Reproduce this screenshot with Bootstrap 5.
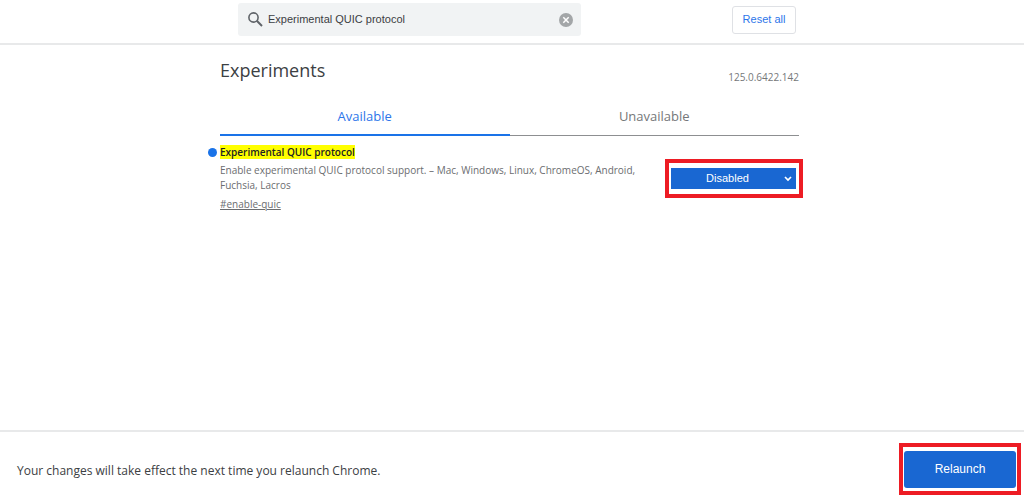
<!DOCTYPE html>
<html lang="en">
<head>
<meta charset="utf-8">
<meta name="viewport" content="width=device-width, initial-scale=1">
<title>Experiments</title>
<link href="https://cdn.jsdelivr.net/npm/bootstrap@5.3.0/dist/css/bootstrap.min.css" rel="stylesheet">
<style>
  body { font-family: "Open Sans", "Noto Sans", sans-serif; font-size: 12px; line-height: 15px; color: #3c4043; background: #fff; }
  .ui-font { font-family: "Liberation Sans", Arial, sans-serif; font-size: 11px; }
  .page-width { max-width: 579px; width: 100%; }
  .top-bar { border-bottom: 2px solid #e8e9ea; padding: 3px 5px 7px 0; }
  .search-box { width: 343px; height: 33px; background: #f1f3f4; border-radius: 3px; margin-left: 18px; padding: 0 8px 0 10px; }
  .search-box input { color: #3c4043; outline: 0; min-width: 0; padding: 0 0 0 5px; }
  .btn-reset { color: #2d76ea; border: 1px solid #dfe1e5; border-radius: 3px; height: 28px; width: 64px; padding: 0; margin-right: 3px; }
  .content { padding: 13px 5px 0 0; }
  h1 { font-size: 18px; line-height: 24px; font-weight: 400; }
  .version { color: #757779; font-size: 10px; padding-top: 12px; }
  .muted { color: #6b6d70; font-size: 10px; }
  .tabs { margin-top: 13px; }
  .tabs .nav-link { font-size: 13px; line-height: 20px; color: #757779; background: none; padding: 8px 0 9px; border: 0; border-bottom: 1px solid #8d8f91; border-radius: 0; }
  .tabs .nav-link.active { color: #2d76ea; border-bottom: 2px solid #1a73e8; padding-bottom: 8px; }
  .flag-row { padding-top: 9px; }
  .flag-dot { left: -12px; top: 3px; width: 9px; height: 9px; background: #1a73e8; }
  .flag-name { font-size: 10px; font-weight: 600; line-height: 15px; color: #202124; margin-bottom: 3px; }
  .flag-name mark { background: #ff0; color: inherit; padding: 0; }
  .flag-text { width: 430px; }
  .flag-text p { margin-bottom: 3px; }
  .frame { border: 4px solid #ed1c24; }
  .select-frame { width: 138px; padding: 5px 3px 5px 2px; margin: 14px -4px 0 0; }
  .flag-select { appearance: none; width: 100%; height: 21px; border: 0; border-radius: 0; background-color: #1967d2; color: #fff; padding: 0 12px 0 0; text-align: center; text-align-last: center; }
  .select-arrow { right: 7px; top: 13px; pointer-events: none; }
  .bottom-bar { border-top: 2px solid #e8e9ea; height: 71px; padding: 4px 3px 0 17px; }
  .bottom-bar span { padding-top: 4px; }
  .relaunch-frame { padding: 4px 1px 3px; }
  .btn-relaunch { width: 112px; height: 37px; padding: 0; background: #1967d2; color: #fff; border: 0; border-radius: 3px; font-family: "Liberation Sans", Arial, sans-serif; font-size: 12px; }
</style>
</head>
<body class="min-vh-100 d-flex flex-column">
  <header class="top-bar">
    <div class="page-width mx-auto d-flex align-items-center justify-content-between">
      <div class="search-box d-flex align-items-center">
        <svg width="15" height="15" viewBox="0 0 15 15" fill="none" stroke="#5f6368" aria-hidden="true"><circle cx="5.5" cy="5.5" r="4.6" stroke-width="1.6"/><path d="M8.8 8.8 14 14" stroke-width="2"/></svg>
        <input class="ui-font flex-grow-1 border-0 bg-transparent" type="text" value="Experimental QUIC protocol" aria-label="Search flags">
        <button class="btn border-0 p-0 d-flex" type="button" aria-label="Clear search"><svg width="14" height="14" viewBox="0 0 14 14"><circle cx="7" cy="7" r="7" fill="#a3a6a8"/><path d="m4.3 4.3 5.4 5.4m0-5.4L4.3 9.7" stroke="#fff" stroke-width="1.5"/></svg></button>
      </div>
      <button class="btn btn-reset ui-font" type="button">Reset all</button>
    </div>
  </header>

  <main class="content flex-grow-1">
    <div class="page-width mx-auto">
      <div class="d-flex justify-content-between align-items-start">
        <h1 class="mb-0">Experiments</h1>
        <span class="version">125.0.6422.142</span>
      </div>
      <div class="tabs nav nav-justified align-items-end" role="tablist">
        <button class="nav-link active" type="button" role="tab" aria-selected="true">Available</button>
        <button class="nav-link" type="button" role="tab" aria-selected="false">Unavailable</button>
      </div>
      <section class="flag-row d-flex justify-content-between align-items-start">
        <div class="flag-text position-relative">
          <span class="flag-dot position-absolute rounded-circle"></span>
          <h2 class="flag-name"><mark>Experimental QUIC protocol</mark></h2>
          <p class="muted">Enable experimental QUIC protocol support. – Mac, Windows, Linux, ChromeOS, Android, Fuchsia, Lacros</p>
          <a class="muted" href="#enable-quic">#enable-quic</a>
        </div>
        <div class="frame select-frame position-relative">
          <select class="flag-select ui-font d-block" aria-label="Experimental QUIC protocol">
            <option>Default</option><option>Enabled</option><option selected>Disabled</option>
          </select>
          <svg class="select-arrow position-absolute" width="8" height="6" viewBox="0 0 8 6" fill="none" stroke="#fff" stroke-width="1.7" aria-hidden="true"><path d="m1 1 3 3 3-3"/></svg>
        </div>
      </section>
    </div>
  </main>

  <footer class="bottom-bar d-flex align-items-center justify-content-between">
    <span>Your changes will take effect the next time you relaunch Chrome.</span>
    <div class="frame relaunch-frame">
      <button class="btn btn-relaunch d-block" type="button">Relaunch</button>
    </div>
  </footer>
<script src="https://cdn.jsdelivr.net/npm/bootstrap@5.3.0/dist/js/bootstrap.bundle.min.js"></script>
</body>
</html>
